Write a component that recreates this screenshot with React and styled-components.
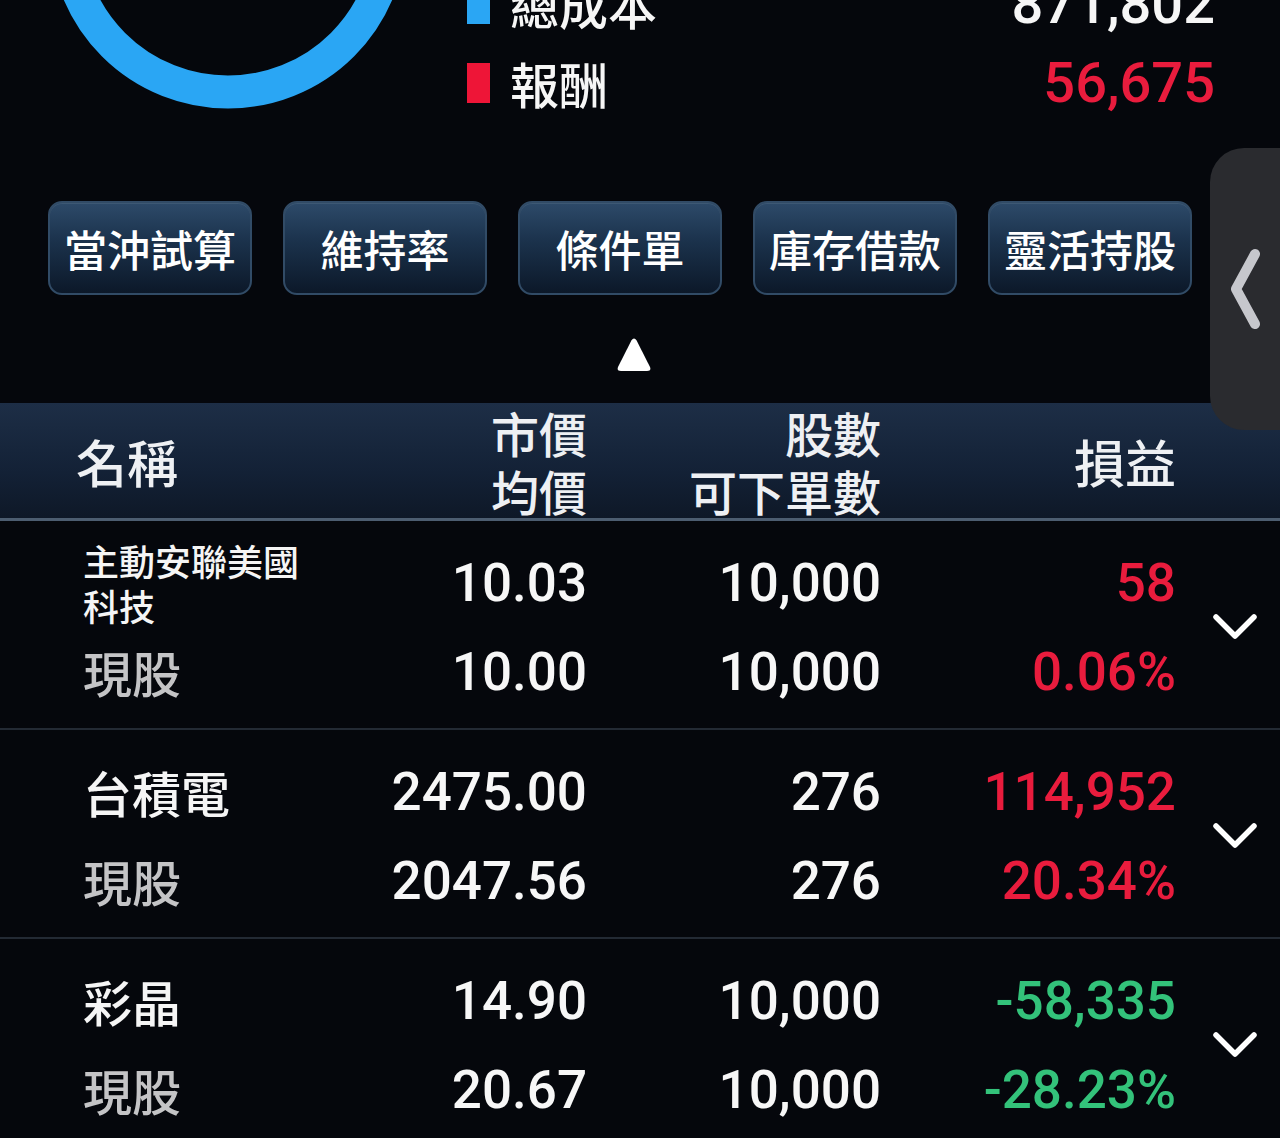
import React from 'react';
import styled, { createGlobalStyle } from 'styled-components';

const GlobalStyle = createGlobalStyle`
  html, body {
    margin: 0;
    padding: 0;
    background: #05070c;
  }
  body {
    font-family: "Noto Sans CJK TC", "Noto Sans", sans-serif;
    color: #f4f4f4;
  }
  #root {
    width: 1280px;
    height: 1138px;
    overflow: hidden;
  }
`;

const Screen = styled.div`
  position: relative;
  width: 1280px;
  height: 1138px;
  overflow: hidden;
  background: #05070c;
`;

// summary is scrolled partly out of view
const Summary = styled.section`
  display: flex;
  align-items: flex-end;
  margin-top: -250px;
  padding: 0 65px 0 48px;
`;

const Chart = styled.svg`
  display: block;
  flex: none;
  margin-bottom: 12px;
`;

const Legend = styled.div`
  flex: 1;
  margin-left: 59px;
`;

const LegendRow = styled.div`
  display: flex;
  align-items: center;
  height: 79px;
`;

const Marker = styled.span`
  width: 23px;
  height: 40px;
  margin-right: 20px;
  background: ${p => p.$color};
`;

const LegendLabel = styled.span`
  font-size: 49px;
  font-weight: 500;
  color: #f6f6f6;
`;

const LegendValue = styled.span`
  margin-left: auto;
  font-family: Roboto, "Liberation Sans", sans-serif;
  font-weight: 500;
  font-size: 56px;
  color: ${p => p.$color || '#f6f6f6'};
`;

const ActionBar = styled.div`
  display: flex;
  gap: 31px;
  margin-top: 79px;
  padding-left: 48px;
`;

const ActionButton = styled.button`
  width: 204px;
  height: 94px;
  border-radius: 14px;
  border: 2px solid #314b66;
  background: linear-gradient(180deg, #2d4a69 0%, #1b324c 42%, #0c1829 100%);
  box-shadow: inset 0 1px 0 rgba(255, 255, 255, 0.08);
  color: #ffffff;
  font-family: "Noto Sans CJK TC", sans-serif;
  font-size: 43px;
  font-weight: 500;
  display: flex;
  align-items: center;
  justify-content: center;
  padding: 0;
`;

const Toggle = styled.div`
  display: flex;
  justify-content: center;
  margin-top: 42px;
  padding-right: 12px;
  height: 35px;
`;

const COLS = '242px 294px 295px 1fr';

const TableHeader = styled.div`
  display: grid;
  grid-template-columns: 269px ${COLS};
  align-items: center;
  height: 115px;
  margin-top: 31px;
  padding: 0 22px 0 76px;
  background: linear-gradient(180deg, #1d2e46 0%, #132136 60%, #0e1827 100%);
  border-bottom: 3px solid #4c5d70;
`;

const HeaderCell = styled.div`
  font-size: ${p => (p.$big ? '51px' : '48px')};
  font-weight: 500;
  line-height: 58px;
  color: #eef0f3;
  text-align: ${p => (p.$right ? 'right' : 'left')};

  span {
    display: block;
  }
`;

const Row = styled.div`
  display: grid;
  grid-template-columns: 262px ${COLS};
  grid-template-rows: 89px 89px;
  align-items: center;
  padding: 17px 22px 12px 83px;
  border-bottom: 2px solid #232a34;
`;

const Name = styled.div`
  font-size: ${p => (p.$small ? '36px' : '49px')};
  line-height: ${p => (p.$small ? '45px' : '58px')};
  font-weight: 500;
  color: #f5f5f5;
`;

const Kind = styled.div`
  font-size: 49px;
  font-weight: 500;
  color: #c4c4c6;
`;

const Num = styled.div`
  font-family: Roboto, "Liberation Sans", sans-serif;
  font-weight: 500;
  font-size: 53px;
  text-align: right;
  color: ${p => p.$color || '#f7f7f7'};
`;

const Expand = styled.svg`
  grid-row: span 2;
  justify-self: end;
  display: block;
`;

const SideTab = styled.div`
  position: absolute;
  top: 148px;
  right: 0;
  width: 70px;
  height: 282px;
  border-radius: 34px 0 0 34px;
  background: #2a2b2f;
  display: flex;
  align-items: center;
  justify-content: center;
`;

const RED = '#e91c3d';
const GREEN = '#33c27a';

const holdings = [
  { name: '主動安聯美國\n科技', small: true, price: '10.03', avg: '10.00', qty: '10,000', avail: '10,000', pnl: '58', pct: '0.06%', color: RED },
  { name: '台積電', price: '2475.00', avg: '2047.56', qty: '276', avail: '276', pnl: '114,952', pct: '20.34%', color: RED },
  { name: '彩晶', price: '14.90', avg: '20.67', qty: '10,000', avail: '10,000', pnl: '-58,335', pct: '-28.23%', color: GREEN },
];

const actions = ['當沖試算', '維持率', '條件單', '庫存借款', '靈活持股'];

export default function App() {
  return (
    <Screen>
      <GlobalStyle />
      <Summary>
        <Chart width="360" height="360" viewBox="0 0 360 360">
          <circle cx="180" cy="180" r="162" fill="none" stroke="#2aa6f4" strokeWidth="33" />
        </Chart>
        <Legend>
          <LegendRow>
            <Marker $color="#2aa6f4" />
            <LegendLabel>總成本</LegendLabel>
            <LegendValue>871,802</LegendValue>
          </LegendRow>
          <LegendRow>
            <Marker $color="#ee1537" />
            <LegendLabel>報酬</LegendLabel>
            <LegendValue $color={RED}>56,675</LegendValue>
          </LegendRow>
        </Legend>
      </Summary>

      <ActionBar>
        {actions.map(a => (
          <ActionButton key={a}>{a}</ActionButton>
        ))}
      </ActionBar>

      <Toggle>
        <svg width="36" height="35" viewBox="0 0 36 35">
          <path d="M15.4 3.5 Q18 -0.5 20.6 3.5 L34 30 Q35.5 34 31 34 L5 34 Q0.5 34 2 30 Z" fill="#ffffff" />
        </svg>
      </Toggle>

      <TableHeader>
        <HeaderCell $big>名稱</HeaderCell>
        <HeaderCell $right><span>市價</span><span>均價</span></HeaderCell>
        <HeaderCell $right><span>股數</span><span>可下單數</span></HeaderCell>
        <HeaderCell $right $big>損益</HeaderCell>
      </TableHeader>

      {holdings.map(h => (
        <Row key={h.name}>
          <Name $small={h.small}>
            {h.name.split('\n').map(l => <div key={l}>{l}</div>)}
          </Name>
          <Num>{h.price}</Num>
          <Num>{h.qty}</Num>
          <Num $color={h.color}>{h.pnl}</Num>
          <Expand width="46" height="30" viewBox="0 0 46 30">
            <polyline points="4,5 23,24 42,5" fill="none" stroke="#ffffff" strokeWidth="5.5" strokeLinecap="round" strokeLinejoin="round" />
          </Expand>
          <Kind>現股</Kind>
          <Num>{h.avg}</Num>
          <Num>{h.avail}</Num>
          <Num $color={h.color}>{h.pct}</Num>
        </Row>
      ))}

      <SideTab>
        <svg width="36" height="84" viewBox="0 0 36 84">
          <polyline points="28,7 9,42 28,77" fill="none" stroke="#c6c7cc" strokeWidth="10" strokeLinecap="round" strokeLinejoin="round" />
        </svg>
      </SideTab>
    </Screen>
  );
}
